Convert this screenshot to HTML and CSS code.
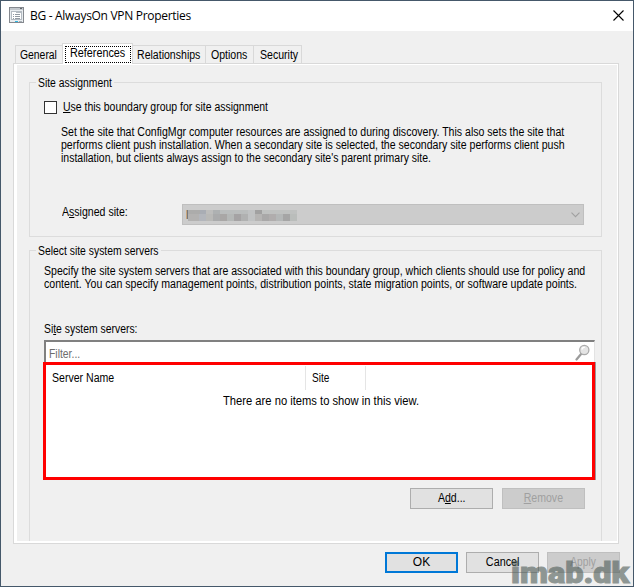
FILE: index.html
```html
<!DOCTYPE html>
<html lang="en">
<head>
<meta charset="utf-8">
<title>BG - AlwaysOn VPN Properties</title>
<link rel="stylesheet" href="styles.css">
</head>
<body>
<div class="window">
  <header class="titlebar">
    <svg class="app-icon" width="15" height="16" viewBox="0 0 15 16" shape-rendering="crispEdges">
      <rect x=".5" y=".5" width="14" height="15" fill="#e9edf0" stroke="#85898f"/>
      <path d="M1 1h13v2H1z" fill="#c3c8cd"/>
      <path d="M11 1h2v1h-2z" fill="#62676d"/>
      <path d="M2 4h11v9H2z" fill="#b4bbc2"/>
      <path d="M3 5h4v1H3zM3 6h9v6H3z" fill="#fff"/>
      <path d="M4 7h1v1H4zM4 9h1v1H4zM4 11h1v1H4zM6 7h5v1H6zM6 9h5v1H6zM6 11h5v1H6z" fill="#929aa2"/>
      <path d="M6 14h3v1H6z" fill="#2fb5df"/>
      <path d="M10 14h3v1h-3z" fill="#a9b0b6"/>
    </svg>
    <h1 class="title">BG - AlwaysOn VPN Properties</h1>
    <svg class="close" width="11" height="11" viewBox="0 0 11 11"><path d="M.5 .5l10 10M10.500 .5l-10 10" stroke="#000" stroke-width="1.1"/></svg>
  </header>

  <nav class="tabs">
    <div class="tab general"><span class="t t-slim">General</span></div>
    <div class="tab active"><div class="focus"><span class="t t-wide">References</span></div></div>
    <div class="tab relationships"><span class="t">Relationships</span></div>
    <div class="tab options"><span class="t">Options</span></div>
    <div class="tab security"><span class="t">Security</span></div>
  </nav>

  <main class="panel">
    <section class="group assignment">
      <div class="legend legend-a"><span class="t t-slim">Site assignment</span></div>
      <div class="check-row"><span class="checkbox"></span><span class="t t-snug"><u>U</u>se this boundary group for site assignment</span></div>
      <p class="desc">
        <span class="t">Set the site that ConfigMgr computer resources are assigned to during discovery. This also sets the site that</span>
        <span class="t">performs client push installation. When a secondary site is selected, the secondary site performs client push</span>
        <span class="t t-snug">installation, but clients always assign to the secondary site's parent primary site.</span>
      </p>
      <div class="assigned">
        <span class="assigned-label"><span class="t">A<u>s</u>signed site:</span></span>
        <div class="combo">
          <svg width="112" height="12" viewBox="0 0 112 12" shape-rendering="crispEdges">
            <path d="M0 1h1v9H0z" fill="#c9a67c"/><path d="M1 1h1v9H1z" fill="#77777b"/>
            <path d="M2 1h12v4H2z" fill="#acacab"/><path d="M14 1h6v4h-6z" fill="#a9adb4"/><path d="M20 1h7v4h-7z" fill="#bdbdbc"/><path d="M27 1h7v4h-7z" fill="#aeb1b2"/><path d="M34 1h28v4H34z" fill="#babdbd"/><path d="M69 1h7v4h-7z" fill="#a1a1a1"/><path d="M76 1h35v4H76z" fill="#bfc1c0"/>
            <path d="M2 5h11v7H2z" fill="#b3b2b1"/><path d="M13 5h7v7h-7z" fill="#b3b6bc"/><path d="M20 5h7v7h-7z" fill="#b9b9b7"/><path d="M27 5h7v7h-7z" fill="#aaabac"/><path d="M34 5h7v7h-7z" fill="#a9a7a6"/><path d="M41 5h7v7h-7z" fill="#b5b8b7"/><path d="M48 5h7v7h-7z" fill="#a5a3a4"/><path d="M55 5h7v7h-7z" fill="#b0b1b1"/><path d="M62 1h7v11h-7z" fill="#c0c2c3"/><path d="M69 5h7v7h-7z" fill="#b5b4b3"/><path d="M76 5h7v7h-7z" fill="#a9a8a8"/><path d="M83 5h7v7h-7z" fill="#b0adad"/><path d="M90 5h7v7h-7z" fill="#b4b7b7"/><path d="M97 5h7v7h-7z" fill="#a5a5a5"/><path d="M104 5h7v7h-7z" fill="#babdbb"/>
          </svg>
          <svg width="9" height="6" viewBox="0 0 9 6"><path d="M.5 .7l4 4 4-4" fill="none" stroke="#a0a0a0" stroke-width="1.1"/></svg>
        </div>
      </div>
    </section>

    <section class="group servers">
      <div class="legend legend-b"><span class="t t-slim">Select site system servers</span></div>
      <p class="desc">
        <span class="t">Specify the site system servers that are associated with this boundary group, which clients should use for policy and</span>
        <span class="t t-content">content. You can specify management points, distribution points, state migration points, or software update points.</span>
      </p>
      <div class="list-label"><span class="t t-slim">Si<u>t</u>e system servers:</span></div>
      <div class="filter">
        <span class="t t-slim">Filter...</span>
        <svg width="16" height="17" viewBox="0 0 16 17"><path d="M6.500 9.500L1.500 15.500" stroke="#9b9b9b" stroke-width="2.200" stroke-linecap="round"/><circle cx="9.300" cy="6" r="4.600" fill="#e4e4e4" stroke="#aaa" stroke-width="1.300"/><path d="M6.800 5.500a2.700 2.700 0 0 1 3-2" fill="none" stroke="#fff" stroke-width="1.200"/></svg>
      </div>
      <div class="list">
        <div class="list-head">
          <div class="col col-name"><span class="t">Server Name</span></div>
          <div class="col col-site"><span class="t t-site">Site</span></div>
        </div>
        <div class="empty"><span class="t t-empty">There are no items to show in this view.</span></div>
      </div>
      <div class="list-actions">
        <div class="button add"><span class="t">A<u>d</u>d...</span></div>
        <div class="button disabled"><span class="t"><u>R</u>emove</span></div>
      </div>
    </section>
  </main>

  <footer class="actions">
    <div class="button primary"><span class="t t-ok">OK</span></div>
    <div class="button"><span class="t t-wide">Cancel</span></div>
    <div class="button disabled"><span class="t t-apply">Apply</span></div>
  </footer>
  <div class="watermark">imab.dk</div>
</div>
</body>
</html>
```
FILE: styles.css
```css
* { box-sizing: border-box; }

body {
  margin: 0;
  font: 12px/13px "Liberation Sans", Arial, sans-serif;
  color: #000;
}

.window {
  position: relative;
  width: 634px;
  height: 587px;
  overflow: hidden;
  border: 1px solid #45586a;
  background: #f0f0f0;
}

/* Condensed dialog text */
.t {
  display: inline-block;
  white-space: nowrap;
  transform: scaleX(.88);
  transform-origin: 0 50%;
}
.t u { text-underline-offset: 1px; text-decoration-thickness: 1px; text-decoration-skip-ink: none; }
.t-slim { transform: scaleX(.865); }
.t-snug { transform: scaleX(.873); }
.t-content { transform: scaleX(.883); }
.t-wide { transform: scaleX(.9); }
.t-empty { transform: scaleX(.933); }
.t-site { transform: scaleX(.84); }

.titlebar {
  display: flex;
  height: 30px;
  padding: 6px 9px 0 8px;
  background: #fff;
}
.title {
  flex: 1;
  margin: 0 0 0 6px;
  font: 12px/17px "Open Sans", sans-serif;
  letter-spacing: -.3px;
}
.close { margin: 3px 0 0; }

.tabs {
  display: flex;
  align-items: flex-end;
  height: 32px;
  padding-left: 14px;
}
.tab {
  height: 18px;
  padding: 3px 0 0 5px;
  border: 1px solid #d9d9d9;
  border-width: 1px 1px 0 0;
  background: #f0f0f0;
}
.general { width: 48px; padding-left: 4px; border-left-width: 1px; }
.active {
  position: relative;
  width: 71px;
  height: 21px;
  margin: 0 0 -1px -1px;
  padding: 2px 0 0 2px;
  border-left-width: 1px;
  background: #fff;
}
.focus {
  width: 66px;
  height: 17px;
  padding: 0 0 0 4px;
  border: 1px dotted #000;
}
.relationships { width: 73px; padding-left: 4px; }
.options { width: 48px; }
.security { width: 48px; padding-left: 6px; }

.panel {
  width: 606px;
  height: 481px;
  margin-left: 12px;
  padding: 17px 15px 0 12px;
  border: 1px solid #d9d9d9;
  box-shadow: inset 3px 0 #fff, inset 0 1px #fff, inset -1px 0 #fff, inset 0 -2px #fff;
}
.group {
  width: 573px;
  margin-left: 3px;
  border: 1px solid #dcdcdc;
}
.assignment { height: 155px; margin-top: 1px; }
.servers { height: 291px; margin-top: 13px; border-bottom: 0; }
.legend {
  height: 13px;
  margin: -6px 0 0 6px;
  padding-left: 2px;
  background: #f0f0f0;
}
.legend-a { width: 78px; }
.legend-b { width: 125px; }

.check-row { display: flex; margin: 11px 0 0 14px; }
.checkbox {
  width: 13px;
  height: 13px;
  margin-right: 6px;
  border: 1px solid #333;
  background: #fff;
}
.desc { display: flex; flex-direction: column; margin: 0; }
.assignment .desc { margin: 12px 0 0 31px; }
.assigned { display: flex; margin: 39px 0 0 32px; }
.assigned-label { width: 120px; padding-top: 2px; }
.combo {
  display: flex;
  align-items: center;
  justify-content: space-between;
  width: 402px;
  height: 21px;
  padding: 0 3px;
  border: 1px solid #bfbfbf;
  background: #ccc;
}

.servers .desc { margin: 7px 0 0 14px; }
.list-label { height: 13px; margin: 32px 0 0 14px; }
.filter {
  display: flex;
  justify-content: space-between;
  width: 551px;
  height: 22px;
  margin: 4px 0 0 14px;
  padding: 6px 3px 0 3px;
  border: 2px solid #808080;
  border-width: 2px 1px 0 2px;
  border-right-color: #e3e3e3;
  background: #fff;
  color: #6d6d6d;
}
.filter svg { margin-top: -4px; }
.list {
  width: 552px;
  height: 118px;
  margin-left: 13px;
  border: 3px solid #f00;
  background: #fff;
  box-shadow: 1px 0 #999;
}
.list-head { display: flex; height: 25px; padding-top: 1px; }
.col { padding: 6px 0 0 6px; border-right: 1px solid #e5e5e5; }
.col-name { width: 260px; }
.col-site { width: 60px; }
.empty { padding: 5px 0 0 177px; }
.list-actions { display: flex; gap: 9px; margin: 8px 0 0 380px; }

.button {
  display: flex;
  align-items: center;
  justify-content: center;
  height: 21px;
  border: 1px solid #adadad;
  background: #e1e1e1;
}
.button .t { transform-origin: 50% 50%; }
.list-actions .button { width: 83px; }
.disabled { border-color: #bfbfbf; background: #ccc; color: #a0a0a0; }
.primary { border: 2px solid #0078d7; }
.t-ok { transform: none; }
.t-apply { transform: scaleX(.85); }

.actions { display: flex; gap: 8px; margin: 8px 0 0 384px; }
.actions .button { width: 73px; }

.watermark {
  position: absolute;
  left: 510px;
  top: 558px;
  font: 900 29px/28px Roboto, sans-serif;
  color: #4e5c57;
  -webkit-text-stroke: 1px #4e5c57;
  opacity: .6;
  transform: scaleX(1.12);
  transform-origin: 0 50%;
}
```
